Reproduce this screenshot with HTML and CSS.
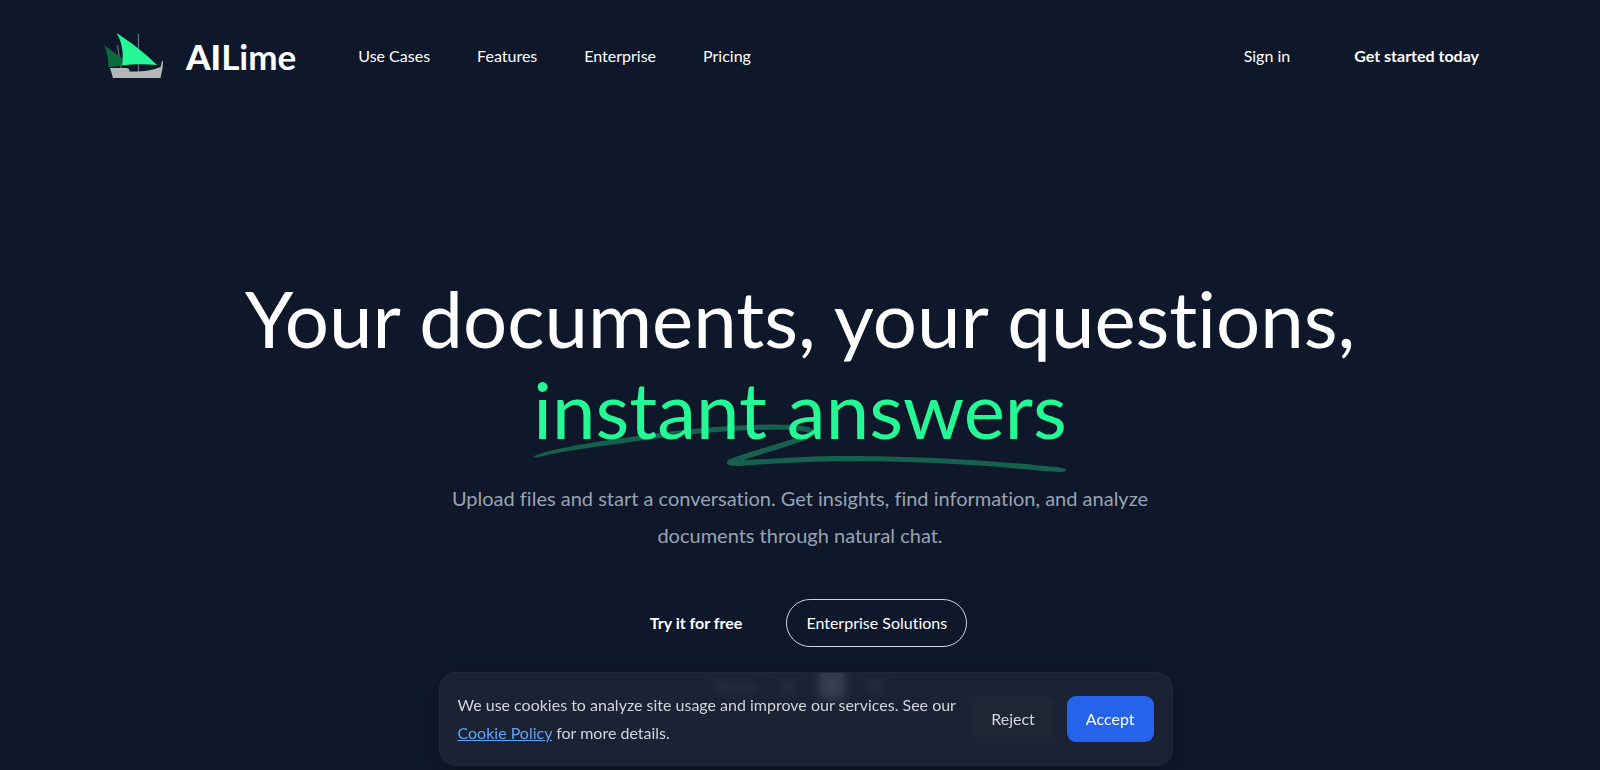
FILE: index.html
```html
<!DOCTYPE html>
<html lang="en">
<head>
<meta charset="utf-8">
<meta name="viewport" content="width=device-width, initial-scale=1">
<title>AILime</title>
<link rel="stylesheet" href="styles.css">
</head>
<body>
<header class="header">
  <a class="brand" href="#">
    <svg class="brand-mark" viewBox="0 0 60 48" aria-hidden="true">
      <path d="M13.500 13l2 14M17 32v5M34.500 2v38" stroke="#6b7280" stroke-width="1.200" fill="none"/>
      <path d="M0 13c6 5 13 9 18 13 1 3 0 5-1 8L4.500 35C4.500 26 3 20 0 13Z" fill="#0b6a3c"/>
      <path d="M12.500 1C28 11 42 22 53 33c-12-1-24-1-35 .5C20 21 18 10 12.500 1Z" fill="#25f995"/>
      <path d="M6 36h17l2 1 .5 2.500c11 .5 23-1 31-4.500l1.500-6h1l-.5 8-2 9H9L6 36Z" fill="#b5b6b8"/>
    </svg>
    <span class="brand-name"><b>AI</b>Lime</span>
  </a>
  <nav class="nav" aria-label="Main">
    <a href="#">Use Cases</a>
    <a href="#">Features</a>
    <a href="#">Enterprise</a>
    <a href="#">Pricing</a>
  </nav>
  <div class="account">
    <a href="#">Sign in</a>
    <a class="strong" href="#">Get started today</a>
  </div>
</header>
<main class="hero">
  <h1>Your documents, your questions,
    <span class="accent">
      <svg class="swoosh" viewBox="0 0 418 42" preserveAspectRatio="none" aria-hidden="true"><path d="M203.371.916c-26.013-2.078-76.686 1.963-124.73 9.946L67.3 12.749C35.421 18.062 18.2 21.766 6.004 25.934 1.244 27.561.828 27.778.874 28.61c.07 1.214.828 1.121 9.595-1.176 9.072-2.377 17.15-3.92 39.246-7.496C123.565 7.986 157.869 4.492 195.942 5.046c7.461.108 19.25 1.696 19.17 2.582-.107 1.183-7.874 4.31-25.75 10.366-21.992 7.45-35.43 12.534-36.701 13.884-2.173 2.308-.202 4.407 4.442 4.734 2.654.187 3.263.157 15.593-.78 35.401-2.686 57.944-3.488 88.365-3.143 46.327.526 75.721 2.23 130.788 7.584 19.787 1.924 20.814 1.98 24.557 1.332l.066-.011c1.201-.203 1.53-1.825.399-2.335-2.911-1.31-4.893-1.604-22.048-3.261-57.509-5.556-87.871-7.36-132.059-7.842-23.239-.254-33.617-.116-50.627.674-11.629.54-42.371 2.494-46.696 2.967-2.359.259 8.133-3.625 26.504-9.81 23.239-7.825 27.934-10.149 28.304-14.005.417-4.348-3.529-6-16.878-7.066Z"/></svg>
      <span class="accent-text">instant answers</span>
    </span>
  </h1>
  <p class="lead">Upload files and start a conversation. Get insights, find information, and analyze documents through natural chat.</p>
  <div class="actions">
    <a class="strong plain" href="#">Try it for free</a>
    <a class="outline" href="#">Enterprise Solutions</a>
  </div>
  <div class="share">
    <span>Share:</span>
    <svg viewBox="0 0 24 24" aria-hidden="true"><path d="M4 4l16 16M20 4L4 20" stroke="currentColor" stroke-width="2"/></svg>
    <svg class="share-box" viewBox="0 0 24 24" aria-hidden="true"><rect width="24" height="24" rx="3" fill="currentColor"/></svg>
    <svg viewBox="0 0 24 24" aria-hidden="true"><path d="M19 5L5 12l14 7" fill="none" stroke="currentColor" stroke-width="3"/></svg>
  </div>
</main>
<section class="cookies" aria-label="Cookie notice">
  <p>We use cookies to analyze site usage and improve our services. See our <a href="#">Cookie Policy</a> for more details.</p>
  <div class="cookie-actions">
    <button class="reject" type="button">Reject</button>
    <button class="accept" type="button">Accept</button>
  </div>
</section>
</body>
</html>
```
FILE: styles.css
```css
* { box-sizing: border-box; }
body {
  margin: 0;
  min-height: 100vh;
  overflow: hidden;
  background: #0f172a;
  color: #fff;
  font: 16px/28px Lato, "Liberation Sans", sans-serif;
  font-variant-ligatures: none;
}
a { color: inherit; text-decoration: none; }
.header {
  display: flex;
  align-items: center;
  max-width: 1392px;
  margin: 0 auto;
  padding: 32px 0;
}
.brand { display: flex; align-items: center; gap: 22px; }
.brand-mark { width: 60px; height: 48px; }
.brand-name { font-size: 35px; line-height: 48px; font-weight: 700; }
.brand-name b { font-weight: 900; }
.nav { display: flex; gap: 47px; margin-left: 62px; }
.account { display: flex; gap: 64px; margin-left: auto; padding-right: 17px; }
.strong { font-weight: 700; }
.hero {
  display: flex;
  flex-direction: column;
  align-items: center;
  padding-top: 161px;
  text-align: center;
}
h1 { margin: 0; font-size: 78px; line-height: 91px; font-weight: 400; }
.accent { display: table; position: relative; margin: 0 auto; color: #25f995; }
.accent-text { position: relative; }
.swoosh {
  position: absolute;
  top: 66%;
  left: 0;
  width: 100%;
  height: 48px;
  fill: rgba(37, 249, 149, .33);
}
.lead {
  max-width: 712px;
  margin: 25px 0 0;
  color: #98a3b3;
  font-size: 20px;
  line-height: 37px;
}
.actions { display: flex; align-items: center; gap: 27px; margin-top: 45px; }
.plain { padding: 9px 17px; }
.outline {
  padding: 9px 19px;
  border: 1px solid #cbd5e1;
  border-radius: 24px;
}
.share { display: flex; align-items: center; gap: 20px; margin-top: 25px; color: #94a3b8; }
.share svg { width: 20px; height: 20px; }
.share .share-box { width: 26px; height: 26px; }
.cookies {
  position: fixed;
  bottom: 4px;
  left: 11px;
  right: 0;
  display: flex;
  align-items: center;
  gap: 12px;
  max-width: 734px;
  margin: 0 auto;
  padding: 18px;
  border: 1px solid #1e293b;
  border-radius: 16px;
  background: rgba(29, 38, 54, .8);
  backdrop-filter: blur(4px);
  box-shadow: 0 8px 24px rgba(0, 0, 0, .25);
  color: #d1d5db;
}
.cookies p { flex: 1; margin: 0; }
.cookies p a { color: #60a5fa; text-decoration: underline; }
.cookie-actions { display: flex; gap: 13px; }
.cookies button {
  padding: 9px 19px;
  border: 0;
  border-radius: 9px;
  color: inherit;
  font: inherit;
}
.cookies .reject { background: #1e2635; }
.cookies .accept { background: #2563eb; color: #fff; }
```
